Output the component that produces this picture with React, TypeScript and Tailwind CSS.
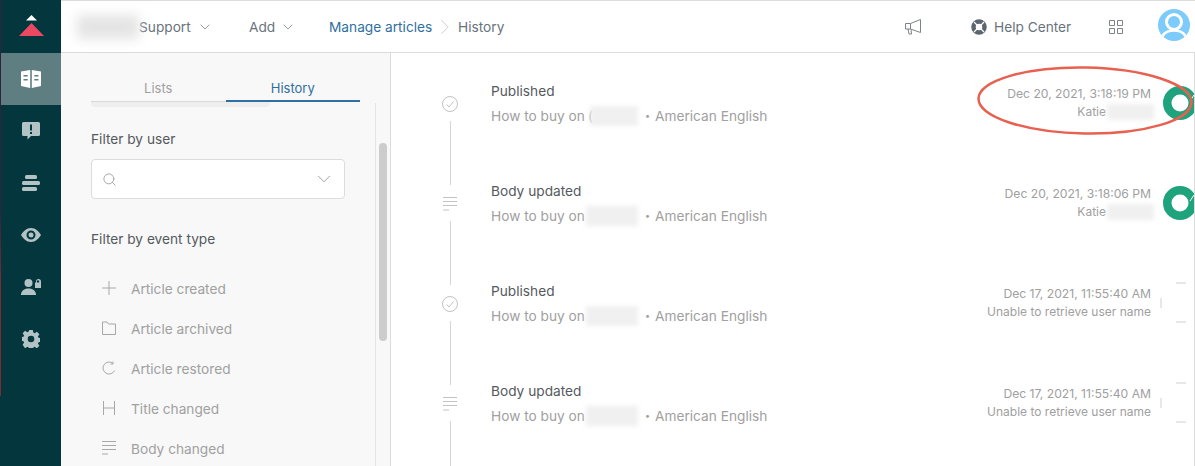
import React from 'react';
import { ChevronDown, ChevronRight, Search } from 'lucide-react';

interface HistoryRow {
  title: string;
  date: string;
  user: string;
  blurUser: boolean;
  icon: 'check' | 'lines';
  avatar: 'ring' | 'empty';
}

const rows: HistoryRow[] = [
  { title: 'Published', date: 'Dec 20, 2021, 3:18:19 PM', user: 'Katie', blurUser: true, icon: 'check', avatar: 'ring' },
  { title: 'Body updated', date: 'Dec 20, 2021, 3:18:06 PM', user: 'Katie', blurUser: true, icon: 'lines', avatar: 'ring' },
  { title: 'Published', date: 'Dec 17, 2021, 11:55:40 AM', user: 'Unable to retrieve user name', blurUser: false, icon: 'check', avatar: 'empty' },
  { title: 'Body updated', date: 'Dec 17, 2021, 11:55:40 AM', user: 'Unable to retrieve user name', blurUser: false, icon: 'lines', avatar: 'empty' },
];

const LinesIcon = ({ className }: { className: string }) => (
  <svg viewBox="0 0 14 14" fill="none" stroke="currentColor" strokeWidth="1" className={className}>
    <path d="M0 .5h14M0 4.500h14M0 8.500h14M0 13h6" />
  </svg>
);

const eventTypes = [
  { label: 'Article created', icon: <svg viewBox="0 0 14 14" fill="none" stroke="currentColor" className="w-[14px] h-[14px]"><path d="M7 0v14M0 7h14" /></svg> },
  { label: 'Article archived', icon: <svg viewBox="0 0 14 14" fill="none" stroke="currentColor" className="w-[14px] h-[14px]"><path d="M.5 1h4.500l1.500 2h7v10.500H.5z" /></svg> },
  { label: 'Article restored', icon: <svg viewBox="0 0 14 14" fill="none" stroke="currentColor" className="w-[14px] h-[14px]"><path d="M12.500 9.500A6 6 0 1 1 11 2.500M11 .5v2.500H8.500" /></svg> },
  { label: 'Title changed', icon: <svg viewBox="0 0 14 14" fill="none" stroke="currentColor" className="w-[14px] h-[14px]"><path d="M1.500 0v14M12.500 0v14M1.500 7h11" /></svg> },
  { label: 'Body changed', icon: <LinesIcon className="w-[14px] h-[14px]" /> },
];

const railIcons = [
  <svg key="book" viewBox="0 0 20 18" className="w-5 h-[18px]" fill="currentColor"><path d="M0 1.500 9.200 0v18L0 16zM10.800 0 20 1.500V16l-9.200 2z" /><path d="M2.500 5h4.200v1.500H2.500zM2.500 9h4.200v1.500H2.500zM13.300 5h4.200v1.500h-4.200zM13.300 9h4.200v1.500h-4.200z" fill="#5e7e82" /></svg>,
  <svg key="alert" viewBox="0 0 18 18" className="w-[18px] h-[18px]" fill="currentColor"><path fillRule="evenodd" d="M1.500 0h15A1.500 1.500 0 0 1 18 1.500v11a1.500 1.500 0 0 1-1.500 1.500H9l-3.500 3.500V14h-4A1.500 1.500 0 0 1 0 12.500v-11A1.500 1.500 0 0 1 1.500 0zM8 2.500v6h2v-6zM8 10v2h2v-2z" /></svg>,
  <svg key="list" viewBox="0 0 18 16" className="w-[18px] h-4" fill="currentColor"><rect x="3" y="0" width="12" height="4" rx="1.500" /><rect x="0" y="6" width="18" height="4" rx="1.500" /><rect x="0" y="12" width="15" height="4" rx="1.500" /></svg>,
  <svg key="eye" viewBox="0 0 20 14" className="w-5 h-[14px]" fill="currentColor"><path fillRule="evenodd" d="M10 0c4.500 0 8 3.500 10 7-2 3.500-5.500 7-10 7S2 10.500 0 7c2-3.500 5.500-7 10-7zm0 2.500a4.500 4.500 0 1 0 0 9 4.500 4.500 0 0 0 0-9zm0 2a2.500 2.500 0 1 1 0 5 2.500 2.500 0 0 1 0-5z" /></svg>,
  <svg key="user" viewBox="0 0 20 16" className="w-5 h-4" fill="currentColor"><circle cx="7.500" cy="4" r="4" /><path d="M0 16c0-4 3-6.500 7.500-6.500S15 12 15 16z" /><path fillRule="evenodd" d="M14 3.500h1V2.500a2.500 2.500 0 0 1 5 0v1h0V9h-6zm1.800 0h2.400V2.500a1.200 1.200 0 0 0-2.400 0z" /></svg>,
  <svg key="gear" viewBox="0 0 18 18" className="w-[18px] h-[18px]" fill="currentColor"><path fillRule="evenodd" d="M7.200 0h3.600l.5 2.600 1.400.6 2.200-1.500 2.500 2.500-1.500 2.200.6 1.400 2.500.5v3.400l-2.500.5-.6 1.400 1.500 2.200-2.500 2.500-2.200-1.500-1.400.6-.5 2.600H7.200l-.5-2.600-1.400-.6-2.200 1.500L.6 14.800l1.500-2.200-.6-1.400L-1 10.700V7.300l2.500-.5.6-1.400L.6 3.200l2.500-2.500 2.200 1.500 1.400-.6zM9 5.700a3.300 3.300 0 1 0 0 6.600 3.300 3.300 0 0 0 0-6.600z" /></svg>,
];

const Avatar = ({ kind }: { kind: HistoryRow['avatar'] }) =>
  kind === 'ring' ? (
    <svg viewBox="0 0 34 34" className="w-[34px] h-[34px] shrink-0 ml-3 mt-[5px]">
      <circle cx="17" cy="17" r="12.750" fill="none" stroke="#1fa37c" strokeWidth="8.500" />
      <path d="M27 15 31 9" stroke="#fff" strokeWidth="1" />
    </svg>
  ) : (
    <svg viewBox="0 0 34 34" className="w-[34px] h-[34px] shrink-0 ml-3 mt-[5px] overflow-visible" fill="none" stroke="#d0d0d0">
      <path d="M13 -3h10M13 36h10M-2 12v10" />
    </svg>
  );

const App: React.FC = () => {
  return (
    <div className="flex w-[1195px] h-[466px] overflow-hidden bg-white font-['Inter',sans-serif] text-[13.7px] leading-5">
      {/* Left rail */}
      <div className="w-px shrink-0 bg-[linear-gradient(#2d2440_0%,#2d2440_45%,#7a2a3a_60%,#7a2a3a_85%,#03363d_85%)]" />
      <nav className="w-[60px] shrink-0 bg-[#03363d] flex flex-col text-[#b3c3c5]">
        <div className="h-[53px] flex items-center justify-center">
          <svg viewBox="0 0 25 22" className="w-[25px] h-[22px] -mt-[1px]">
            <path d="M12.500 0 18 5.500H7z" fill="#fff" />
            <path d="M12.500 8 25 21H0z" fill="#eb4962" />
          </svg>
        </div>
        {railIcons.map((icon, i) => (
          <div key={i} className={`h-[52px] flex items-center justify-center ${i === 0 ? 'bg-[#5e7e82] text-white' : ''}`}>
            {icon}
          </div>
        ))}
      </nav>

      <div className="flex-1 min-w-0 flex flex-col">
        {/* Top bar */}
        <header className="h-[53px] shrink-0 border-t border-b border-[#dcdcdc] flex items-center whitespace-nowrap text-[#68737d]">
          <div className="ml-4 w-[62px] h-6 shrink-0 bg-[#e4e4e4] blur-[6px]" />
          <span className="w-[51px] shrink-0">Support</span>
          <ChevronDown className="w-4 h-4 ml-[7px] shrink-0 text-[#8a8f94]" strokeWidth={1.300} />
          <span className="ml-9 w-[25px] shrink-0">Add</span>
          <ChevronDown className="w-4 h-4 ml-[6px] shrink-0 text-[#8a8f94]" strokeWidth={1.300} />
          <span className="ml-[33px] w-[103px] shrink-0 text-[#2f6f9f]">Manage articles</span>
          <ChevronRight className="w-[26px] h-[26px] shrink-0 text-[#c4c4c4]" strokeWidth={0.800} />
          <span className="w-[45px] shrink-0">History</span>

          <svg viewBox="0 0 17 16" fill="none" stroke="#7d8388" className="w-[17px] h-4 ml-[402px] shrink-0">
            <path d="M.5 4.500h5L15.500.5v13l-10-3.500h-5zM5.500 4.500V10M3 10l1 5h2.500L6 10.500" />
          </svg>
          <svg viewBox="0 0 16 16" className="w-4 h-4 ml-[49px] shrink-0">
            <circle cx="8" cy="8" r="5.500" fill="none" stroke="#5c6670" strokeWidth="4.500" />
            <path d="M3 3l3 3M13 3l-3 3M3 13l3-3M13 13l-3-3" stroke="#fff" strokeWidth="1.200" />
          </svg>
          <span className="ml-[7px] w-[77px] shrink-0">Help Center</span>
          <svg viewBox="0 0 14 14" fill="none" stroke="#7d8388" className="w-[14px] h-[14px] ml-[38px] shrink-0">
            <path d="M.5.5h5v5h-5zM8.500.5h5v5h-5zM.5 8.500h5v5h-5zM8.500 8.500h5v5h-5z" />
          </svg>
          <svg viewBox="0 0 32 32" className="w-8 h-8 ml-[35px] -mt-[3px] shrink-0">
            <defs>
              <clipPath id="avatar-clip"><circle cx="16" cy="16" r="16" /></clipPath>
            </defs>
            <g clipPath="url(#avatar-clip)">
              <rect width="32" height="32" fill="#7ccbfb" />
              <circle cx="16" cy="13" r="7.500" fill="none" stroke="#fff" strokeWidth="3" />
              <path d="M3 32c1-8 7-10.500 13-10.500S28 24 29 32" fill="none" stroke="#fff" strokeWidth="2.500" />
            </g>
          </svg>
        </header>

        <div className="flex-1 min-h-0 flex">
          {/* Sidebar */}
          <aside className="w-[330px] shrink-0 bg-[#f8f8f8] border-r border-[#dcdcdc] flex overflow-hidden">
            <div className="w-[314px] shrink-0 pl-[30px]">
              <div className="h-[49px] flex w-[269px] text-center">
                <div className="flex-1 pt-[26px] border-b border-[#d8d8d8] text-[13px] text-[#a0a0a0] leading-[18px]">Lists</div>
                <div className="flex-1 pt-[26px] border-b-2 border-[#2f6fa5] text-[13px] text-[#2f6f9f] leading-[18px]">History</div>
              </div>
              <div className="h-[6px] w-[179px] bg-[#eeeeee] rounded-b-sm -mt-px" />
              <div className="mt-[22px] text-[#55595d]">Filter by user</div>
              <div className="mt-[10px] w-[254px] h-10 bg-white border border-[#dcdcdc] rounded-[4px] flex items-center px-3 text-[#8a8f94]">
                <Search className="w-[15px] h-[15px] -ml-[2px]" strokeWidth={1.200} />
                <ChevronDown className="w-[22px] h-[22px] ml-auto -mr-[3px]" strokeWidth={0.900} />
              </div>
              <div className="mt-[30px] text-[#55595d]">Filter by event type</div>
              <ul className="mt-[30px] flex flex-col gap-5">
                {eventTypes.map((ev) => (
                  <li key={ev.label} className="flex items-center h-5 text-[#a0a0a0]">
                    <span className="ml-[11px] w-[29px] shrink-0 text-[#a8a8a8] -mt-[2px]">{ev.icon}</span>
                    {ev.label}
                  </li>
                ))}
              </ul>
            </div>
            {/* Scrollbar track starts under the tabs */}
            <div className="mt-[50px] flex-1 border-l border-[#e4e4e4] pl-[3px] pt-[40px]">
              <div className="w-2 h-[198px] bg-[#cccccc] rounded" />
            </div>
          </aside>

          {/* History list */}
          <main className="flex-1 min-w-0 border-r border-[#dcdcdc] overflow-hidden pt-[28px]">
            {rows.map((row, i) => (
              <div key={i} className="h-[100px] flex -mr-[3px]">
                <div className="ml-[50px] w-[18px] shrink-0 flex flex-col items-center pt-[14px] text-[#c2c2c2]">
                  {row.icon === 'check' ? (
                    <svg viewBox="0 0 16 16" fill="none" stroke="currentColor" className="w-4 h-4 my-[1px] shrink-0">
                      <circle cx="8" cy="8" r="7.500" />
                      <path d="M4.500 8.500 7 11l4.500-5.500" />
                    </svg>
                  ) : (
                    <LinesIcon className="w-[14px] h-[14px] my-[2px] shrink-0" />
                  )}
                  <div className="w-px h-[64px] bg-[#d4d4d4] mt-2 shrink-0" />
                </div>
                <div className="ml-[32px]">
                  <div className="text-[#55595d]">{row.title}</div>
                  <div className="mt-[5px] flex items-center text-[#a0a0a0] whitespace-nowrap">
                    <span className="w-[93px] shrink-0">How to buy on</span>
                    {i === 0 ? (
                      <>
                        <span className="ml-[4px] w-[2px] shrink-0">(</span>
                        <span className="w-[48px] h-5 shrink-0 bg-[#f0f0f0] blur-[2px]" />
                      </>
                    ) : (
                      <span className="ml-[2px] w-[52px] h-5 shrink-0 bg-[#f0f0f0] blur-[2px]" />
                    )}
                    <span className="ml-[7px] w-[3px] shrink-0 text-[9px] leading-3">•</span>
                    <span className="ml-[7px]">American English</span>
                  </div>
                </div>
                <div className="ml-auto text-right text-[12px] leading-[18px] text-[#a0a0a0] pt-[4px] whitespace-nowrap">
                  <div className="text-[12.150px]">{row.date}</div>
                  <div className={`flex justify-end items-center ${row.blurUser ? '-mr-[3px]' : ''}`}>
                    {row.user}
                    {row.blurUser && <span className="ml-[1px] w-[47px] h-4 bg-[#f0f0f0] blur-[2px]" />}
                  </div>
                </div>
                <Avatar kind={row.avatar} />
              </div>
            ))}
          </main>
        </div>
      </div>

      {/* Red annotation drawn over the screenshot */}
      <svg viewBox="0 0 1195 466" className="absolute left-0 top-0 w-[1195px] h-[466px] pointer-events-none" fill="none">
        <ellipse cx="1085" cy="100.500" rx="106.500" ry="33" stroke="#e8604f" strokeWidth="2.500" transform="rotate(1 1085 100)" />
      </svg>
    </div>
  );
};

export default App;
